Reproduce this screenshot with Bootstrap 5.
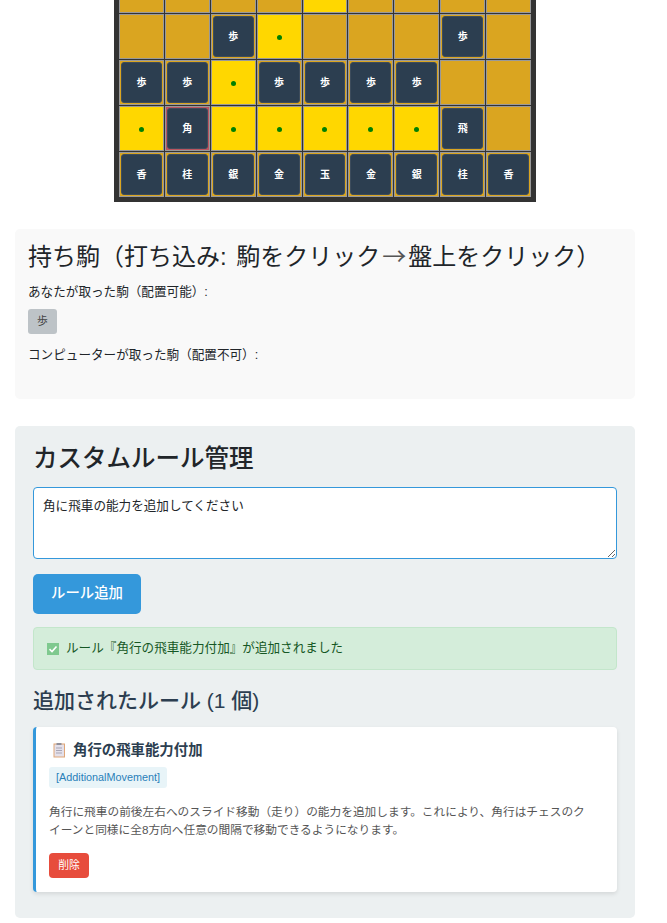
<!DOCTYPE html>
<html lang="ja">
<head>
    <meta charset="UTF-8">
    <meta name="viewport" content="width=device-width, initial-scale=1.0">
    <title>将棋 カスタムルール</title>
    <link href="https://cdn.jsdelivr.net/npm/bootstrap@5.3.0/dist/css/bootstrap.min.css" rel="stylesheet">
    <style>
        body {
            font-family: "Liberation Sans", "Noto Sans CJK JP", sans-serif;
            color: #212529;
            background: #fff;
            overflow: hidden;
            text-spacing-trim: space-all;
            line-break: loose;
        }
        .page-wrap { padding: 0 32px 0 15px; }
        .board-clip { height: 202px; overflow: hidden; }
        .shogi-board {
            width: 422px;
            padding: 5px;
            background: #333;
            display: grid;
            grid-template-columns: repeat(9, 1fr);
            grid-auto-rows: 45px;
            gap: 1px;
            flex: none;
        }
        .shogi-cell {
            background: #daa520;
            border: 1px solid #999;
            padding: 1px;
        }
        .shogi-cell.can-move { background: #ffd700; }
        .shogi-cell.picked { background: #bb5560; }
        .move-dot { width: 5px; height: 5px; border-radius: 50%; background: #008000; margin-top: 2px; }
        .shogi-piece {
            width: 100%;
            height: 100%;
            background: #2c3e50;
            border: 1px solid #3d4c5c;
            border-radius: 3px;
            color: #fff;
            font-size: 10px;
            font-weight: 700;
        }
        .hand-panel {
            margin-top: 27px;
            height: 170px;
            padding: 13px;
            background: #f9f9f9;
            border-radius: 5px;
        }
        .hand-title { font-size: 24px; font-weight: 400; line-height: 25px; margin: 0 0 15px; word-spacing: 3px; white-space: nowrap; }
        .hand-arrow { font-family: "Noto Sans CJK JP", sans-serif; color: #555; margin: 0 2px; }
        .hand-label { font-size: 12.6px; line-height: 16px; margin: 0; }
        .hand-piece {
            width: 29px;
            height: 25px;
            margin: 9px 0 13px;
            background: #bdc3c7;
            border-radius: 3px;
            font-size: 10.8px;
            color: #444;
        }
        .rule-panel {
            margin-top: 27px;
            height: 492px;
            padding: 18px;
            background: #ecf0f1;
            border-radius: 5px;
        }
        .rule-title { font-size: 24.5px; font-weight: 500; line-height: 30px; margin: 0 0 13px; color: #212529; }
        .rule-input {
            display: block;
            width: 100%;
            height: 72px;
            padding: 10px 9px;
            font-size: 12.6px;
            line-height: 16px;
            color: #212529;
            border: 1px solid #3498db;
            border-radius: 4px;
            font-family: inherit;
        }
        .rule-add {
            width: 108px;
            height: 40px;
            margin-top: 15px;
            background: #3498db;
            border: 0;
            border-radius: 5px;
            color: #fff;
            font-size: 14.4px;
            font-weight: 500;
        }
        .rule-notice {
            height: 43px;
            margin-top: 13px;
            padding: 0 12px;
            gap: 6px;
            background: #d4edda;
            border: 1px solid #c3e6cb;
            border-radius: 4px;
            color: #155724;
            font-size: 12.6px;
        }
        .rule-count { font-size: 21px; font-weight: 500; line-height: 24px; margin: 19px 0 14px; color: #2c3e50; }
        .rule-card {
            height: 165px;
            padding: 12px 13px;
            background: #fff;
            border-left: 3px solid #3498db;
            border-radius: 4px;
            box-shadow: 0 2px 4px rgba(0, 0, 0, .1);
        }
        .rule-name { font-size: 14.4px; font-weight: 700; line-height: 22px; color: #2c3e50; margin: 0; gap: 6px; }
        .rule-tag {
            width: 118px;
            height: 21px;
            margin-top: 6px;
            background: #e8f4f8;
            border-radius: 3px;
            color: #2980b9;
            font-size: 10.8px;
        }
        .rule-text { font-size: 11.7px; line-height: 18px; color: #555; margin: 15px 8px 13px 0; }
        .rule-del {
            width: 40px;
            height: 25px;
            background: #e74c3c;
            border: 0;
            border-radius: 4px;
            color: #fff;
            font-size: 10.8px;
            padding: 0;
        }
    </style>
</head>
<body>
    <div class="page-wrap">
        <div class="board-clip d-flex justify-content-center align-items-end">
            <div class="shogi-board" id="board"></div>
        </div>

        <section class="hand-panel">
            <h2 class="hand-title">持ち駒（打ち込み: 駒をクリック<span class="hand-arrow">→</span>盤上をクリック）</h2>
            <p class="hand-label">あなたが取った駒（配置可能）:</p>
            <div class="hand-piece d-flex align-items-center justify-content-center">歩</div>
            <p class="hand-label">コンピューターが取った駒（配置不可）:</p>
        </section>

        <section class="rule-panel">
            <h2 class="rule-title">カスタムルール管理</h2>
            <textarea class="rule-input">角に飛車の能力を追加してください</textarea>
            <button class="rule-add d-block">ルール追加</button>
            <div class="rule-notice d-flex align-items-center">
                <svg width="14" height="14" viewBox="0 0 14 14"><rect x="1" y="1" width="12" height="12" fill="#7fc98f"/><path d="M3.5 7.2 6 9.5l4.5-5" fill="none" stroke="#fff" stroke-width="1.6"/></svg>
                <span>ルール『角行の飛車能力付加』が追加されました</span>
            </div>
            <h3 class="rule-count">追加されたルール (1 個)</h3>
            <div class="rule-card">
                <h4 class="rule-name d-flex align-items-center">
                    <svg width="18" height="16" viewBox="0 0 18 16"><rect x="4.5" y="1.5" width="11.5" height="14" fill="#dfa677"/><rect x="5.5" y="2.5" width="9.5" height="12" fill="#e4e0ea"/><rect x="7.5" y="1" width="5" height="2" fill="#8f8f9a"/><path d="M7 6h6M7 8.5h6M7 11h6" stroke="#a9a6b5"/></svg>
                    <span>角行の飛車能力付加</span>
                </h4>
                <div class="rule-tag d-flex align-items-center justify-content-center">[AdditionalMovement]</div>
                <p class="rule-text">角行に飛車の前後左右へのスライド移動（走り）の能力を追加します。これにより、角行はチェスのクイーンと同様に全8方向へ任意の間隔で移動できるようになります。</p>
                <button class="rule-del">削除</button>
            </div>
        </section>
    </div>

    <script src="https://cdn.jsdelivr.net/npm/bootstrap@5.3.0/dist/js/bootstrap.bundle.min.js"></script>
    <script>
        // 盤面の下5段だけ表示する (* = 移動先, ! = 選択中の駒)
        const rows = [
            ['', '', '', '', '*', '', '', '', ''],
            ['', '', '歩', '*', '', '', '', '歩', ''],
            ['歩', '歩', '*', '歩', '歩', '歩', '歩', '', ''],
            ['*', '!角', '*', '*', '*', '*', '*', '飛', ''],
            ['香', '桂', '銀', '金', '玉', '金', '銀', '桂', '香']
        ];
        const board = document.getElementById('board');
        rows.flat().forEach(function (v) {
            const cell = document.createElement('div');
            cell.className = 'shogi-cell d-flex align-items-center justify-content-center';
            if (v === '*') {
                cell.classList.add('can-move');
                cell.innerHTML = '<div class="move-dot"></div>';
            } else if (v) {
                if (v[0] === '!') cell.classList.add('picked');
                const piece = document.createElement('div');
                piece.className = 'shogi-piece d-flex align-items-center justify-content-center';
                piece.textContent = v.replace('!', '');
                cell.appendChild(piece);
            }
            board.appendChild(cell);
        });
    </script>
</body>
</html>
